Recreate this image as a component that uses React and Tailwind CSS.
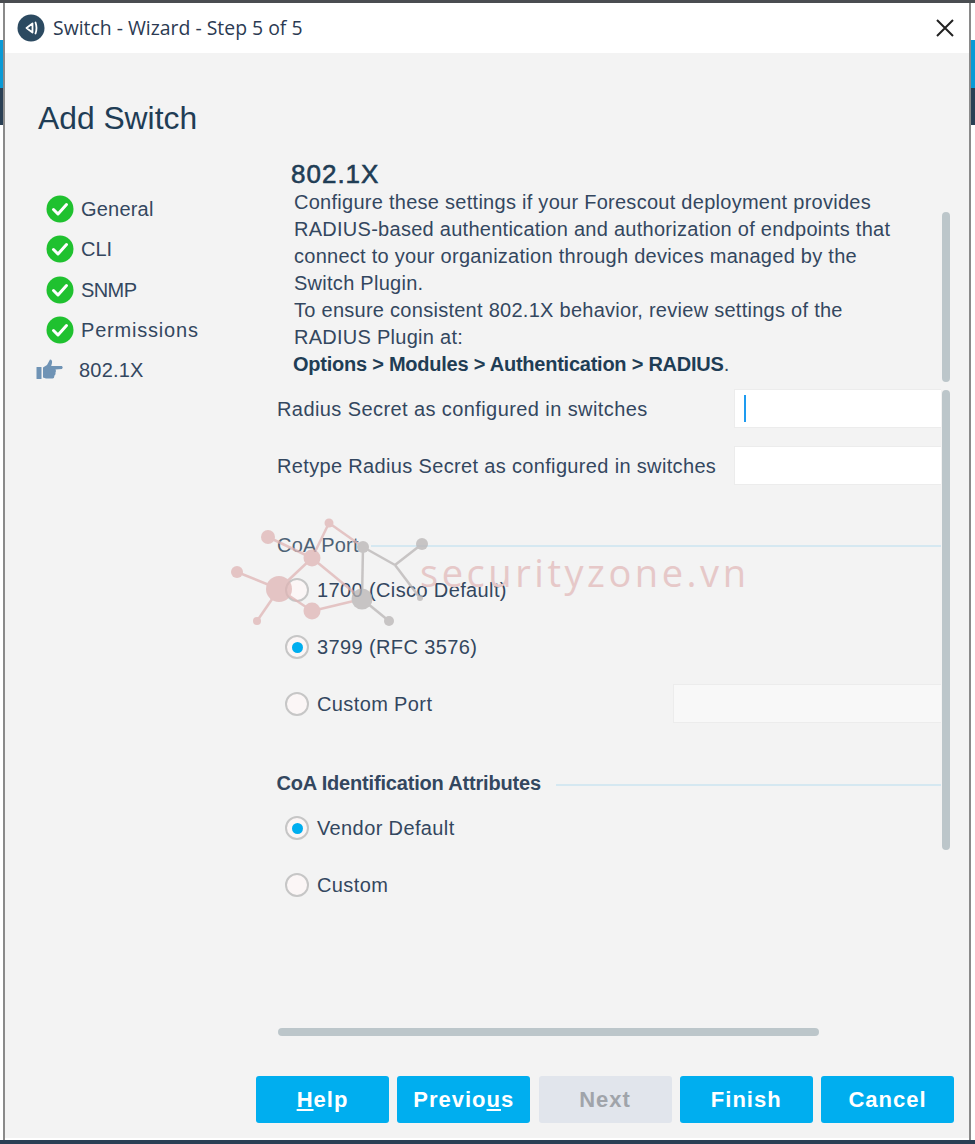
const FONT = "font-['Liberation_Sans',Arial,sans-serif]";

function AppIcon() {
  return (
    <svg width="28" height="28" viewBox="0 0 28 28" className="shrink-0">
      <circle cx="14" cy="14" r="13.5" fill="#2c4a61" />
      <path d="M15.5 9.5 L9.5 14 L15.5 18.5 Z" fill="none" stroke="#fff" strokeWidth="1.8" strokeLinejoin="round" />
      <path d="M18.5 8.5 Q20.5 14 18.5 19.5" fill="none" stroke="#fff" strokeWidth="1.8" strokeLinecap="round" />
    </svg>
  );
}

function Check() {
  return (
    <svg width="28" height="28" viewBox="0 0 28 28" className="shrink-0">
      <circle cx="14" cy="14" r="13.5" fill="#1fc12f" />
      <path d="M7.5 14.5 L12 19 L20.5 9.5" fill="none" stroke="#fff" strokeWidth="3" strokeLinecap="round" strokeLinejoin="round" />
    </svg>
  );
}

function Thumb() {
  return (
    <svg width="28" height="22" viewBox="0 0 28 22" className="shrink-0">
      <rect x="0.5" y="8" width="5" height="12" rx="0.5" fill="#6f93b5" />
      <path d="M7 8.5 L11 6 L14 0.5 Q16.5 0.5 16 4 L15.2 7 L26 7 Q27.5 8.5 26 10 L19.5 10.5 Q20.5 12 19.5 13.5 Q20 15.5 18.5 16.5 Q18.5 19 16.5 19.5 L10 19.5 L7 18.5 Z" fill="#6f93b5" />
    </svg>
  );
}

function Step({ label, tracking }) {
  return (
    <div className={`flex h-[40.3px] items-center gap-[7px] pl-[41px] text-[20px] text-[#33475f] ${tracking}`}>
      <Check />
      <span>{label}</span>
    </div>
  );
}

function Radio({ label, checked, className = "" }) {
  return (
    <div className={`flex h-[26px] items-center gap-[8px] pl-[8px] text-[20px] tracking-[0.38px] text-[#33475f] ${className}`}>
      <span className="flex h-[24px] w-[24px] shrink-0 items-center justify-center rounded-full border-2 border-[#c6c6c6] bg-[#fbf6f6]">
        {checked && <span className="h-[11px] w-[11px] rounded-full bg-[#00aeef]" />}
      </span>
      <span>{label}</span>
    </div>
  );
}

function Btn({ children, disabled }) {
  return (
    <div
      className={`flex h-[47px] w-[133px] items-center justify-center rounded-[3px] text-[22px] font-bold tracking-[1px] ${
        disabled ? "bg-[#e1e5ec] text-[#a0a4aa]" : "bg-[#00aeef] text-white"
      }`}
    >
      {children}
    </div>
  );
}

function Watermark() {
  const pink = "#dfb5b5";
  const gray = "#b9b5b5";
  const pinkLines = [
    [329, 523, 312, 558],
    [268, 537, 312, 558],
    [312, 558, 279, 589],
    [312, 558, 362, 599],
    [279, 589, 312, 611],
    [312, 611, 362, 599],
    [237, 572, 279, 589],
    [257, 621, 279, 589],
    [329, 523, 363, 547],
  ];
  const grayLines = [
    [363, 547, 362, 599],
    [363, 547, 395, 565],
    [395, 565, 422, 544],
    [395, 565, 420, 598],
    [362, 599, 389, 621],
  ];
  const pinkDots = [
    [268, 537, 7],
    [237, 572, 6],
    [279, 589, 13],
    [257, 621, 4],
    [312, 558, 8.5],
    [312, 611, 8.5],
    [329, 523, 4.5],
  ];
  const grayDots = [
    [363, 547, 6],
    [422, 544, 6],
    [362, 599, 10.5],
    [389, 621, 5],
    [420, 598, 3],
  ];
  return (
    <>
      <svg className="pointer-events-none absolute left-0 top-0 opacity-75" width="975" height="1144" viewBox="0 0 975 1144">
        {pinkLines.map((l, i) => (
          <line key={i} x1={l[0]} y1={l[1]} x2={l[2]} y2={l[3]} stroke={pink} strokeWidth="2.5" />
        ))}
        {grayLines.map((l, i) => (
          <line key={i} x1={l[0]} y1={l[1]} x2={l[2]} y2={l[3]} stroke={gray} strokeWidth="2.5" />
        ))}
        {pinkDots.map((d, i) => (
          <circle key={i} cx={d[0]} cy={d[1]} r={d[2]} fill={pink} />
        ))}
        {grayDots.map((d, i) => (
          <circle key={i} cx={d[0]} cy={d[1]} r={d[2]} fill={gray} />
        ))}
      </svg>
      <div className="pointer-events-none absolute left-[420px] top-[551px] text-[38px] leading-[42px] tracking-[3.55px] text-[#e6c8c8] font-['Open_Sans',sans-serif]">
        securityzone.vn
      </div>
    </>
  );
}

export default function App() {
  return (
    <div className={`relative flex h-[1144px] w-[975px] flex-col overflow-hidden bg-[#f7f7f7] ${FONT}`}>
      <div className="h-[3px] shrink-0 bg-[#4a4d51]" />
      <div className="flex min-h-0 flex-1">
        <div className="flex w-[3px] shrink-0 flex-col">
          <div className="h-[37px] bg-white" />
          <div className="h-[48px] bg-[#0a9ad6]" />
          <div className="h-[37px] bg-[#2a3f54]" />
          <div className="flex-1 bg-white" />
        </div>
        <div className="flex min-w-0 flex-1 flex-col border-x-2 border-[#8a8a8a] bg-[#f3f3f3]">
          <div className="flex h-[50px] shrink-0 items-center bg-white pl-[12px] pr-[14px]">
            <AppIcon />
            <span className="ml-[8px] flex-1 text-[19.4px] text-[#2b3a52] font-['Open_Sans',sans-serif]">
              Switch - Wizard - Step 5 of 5
            </span>
            <svg width="20" height="20" viewBox="0 0 20 20">
              <path d="M2 2 L18 18 M18 2 L2 18" stroke="#222" strokeWidth="2" />
            </svg>
          </div>

          <div className="flex min-h-0 flex-1">
            <div className="w-[266px] shrink-0 pt-[45px]">
              <h1 className="ml-[33px] text-[31.8px] leading-[40px] text-[#1f3d55]">Add Switch</h1>
              <div className="mt-[51px]">
                <Step label="General" tracking="tracking-[0.2px]" />
                <Step label="CLI" tracking="tracking-[0px]" />
                <Step label="SNMP" tracking="tracking-[-0.6px]" />
                <Step label="Permissions" tracking="tracking-[0.8px]" />
                <div className="flex h-[40.3px] items-center gap-[15px] pl-[31px] text-[20px] tracking-[0.2px] text-[#33475f]">
                  <Thumb />
                  <span>802.1X</span>
                </div>
              </div>
            </div>

            <div className="flex min-w-0 flex-1 flex-col pl-[6px]">
              <h2 className="ml-[14px] mt-[103px] text-[26px] leading-[36px] font-medium tracking-[1px] text-[#1f3d55] [-webkit-text-stroke:0.6px_#1f3d55]">
                802.1X
              </h2>
              <div className="ml-[17px] mr-[30px] mt-[-3px] text-[20px] leading-[27px] tracking-[0.27px] text-[#33475f]">
                <p className="w-[620px] whitespace-pre-line">
                  {"Configure these settings if your Forescout deployment provides\nRADIUS-based authentication and authorization of endpoints that\nconnect to your organization through devices managed by the\nSwitch Plugin.\nTo ensure consistent 802.1X behavior, review settings of the\nRADIUS Plugin at:"}
                </p>
                <p className="ml-[-1px] tracking-[-0.24px]">
                  <b className="font-bold text-[#1f3d55]">Options &gt; Modules &gt; Authentication &gt; RADIUS</b>.
                </p>
              </div>

              <div className="mt-[11px] flex h-[39px] items-center justify-between pr-[28px]">
                <span className="text-[20px] tracking-[0.41px] text-[#33475f]">Radius Secret as configured in switches</span>
                <div className="flex h-[39px] w-[207px] items-center border border-r-0 border-[#ececec] bg-white pl-[9px]">
                  <span className="h-[27px] w-[2px] bg-[#1e9bf0]" />
                </div>
              </div>
              <div className="mt-[18px] flex h-[39px] items-center justify-between pr-[28px]">
                <span className="text-[20px] tracking-[0.34px] text-[#33475f]">Retype Radius Secret as configured in switches</span>
                <div className="h-[39px] w-[207px] border border-r-0 border-[#ececec] bg-white" />
              </div>

              <div className="mt-[46px] flex h-[28px] items-center gap-[12px] pr-[28px]">
                <span className="text-[20px] tracking-[0.2px] text-[#4d6275]">CoA Port</span>
                <span className="mt-[2px] h-[2px] flex-1 bg-[#d5e8f1]" />
              </div>
              <Radio className="mt-[18px]" label="1700 (Cisco Default)" />
              <Radio className="mt-[31px]" label="3799 (RFC 3576)" checked />
              <div className="mt-[24px] flex h-[39px] items-center justify-between pr-[28px]">
                <Radio label="Custom Port" />
                <div className="h-[39px] w-[268px] border border-r-0 border-[#ececec] bg-[#f8f8f8]" />
              </div>

              <div className="mt-[46px] flex h-[28px] items-center gap-[15px] pr-[28px]">
                <span className="ml-[-0.5px] text-[20px] font-bold tracking-[-0.18px] text-[#33475f]">CoA Identification Attributes</span>
                <span className="mt-[3px] h-[2px] flex-1 bg-[#d5e8f1]" />
              </div>
              <Radio className="mt-[18px]" label="Vendor Default" checked />
              <Radio className="mt-[31px]" label="Custom" />

              <div className="ml-[1px] mt-[130px] h-[8px] w-[541px] rounded-full bg-[#bcc6ca]" />

              <div className="ml-[-21px] mt-[40px] flex gap-[8.25px]">
                <Btn><span><u>H</u>elp</span></Btn>
                <Btn><span>Previo<u>u</u>s</span></Btn>
                <Btn disabled>Next</Btn>
                <Btn>Finish</Btn>
                <Btn>Cancel</Btn>
              </div>
            </div>
          </div>
          <div className="h-[2px] shrink-0 bg-white" />
        </div>
        <div className="flex w-[4px] shrink-0 flex-col">
          <div className="h-[37px] bg-white" />
          <div className="h-[48px] bg-[#0a9ad6]" />
          <div className="h-[37px] bg-[#2a3f54]" />
          <div className="flex-1 bg-white" />
        </div>
      </div>
      <div className="h-[4px] shrink-0 bg-[#2a3f54]" />

      <div className="absolute left-[942px] top-[212px] h-[170px] w-[8px] rounded-full bg-[#bcc6ca]" />
      <div className="absolute left-[942px] top-[390px] h-[460px] w-[8px] rounded-full bg-[#bcc6ca]" />
      <Watermark />
    </div>
  );
}
